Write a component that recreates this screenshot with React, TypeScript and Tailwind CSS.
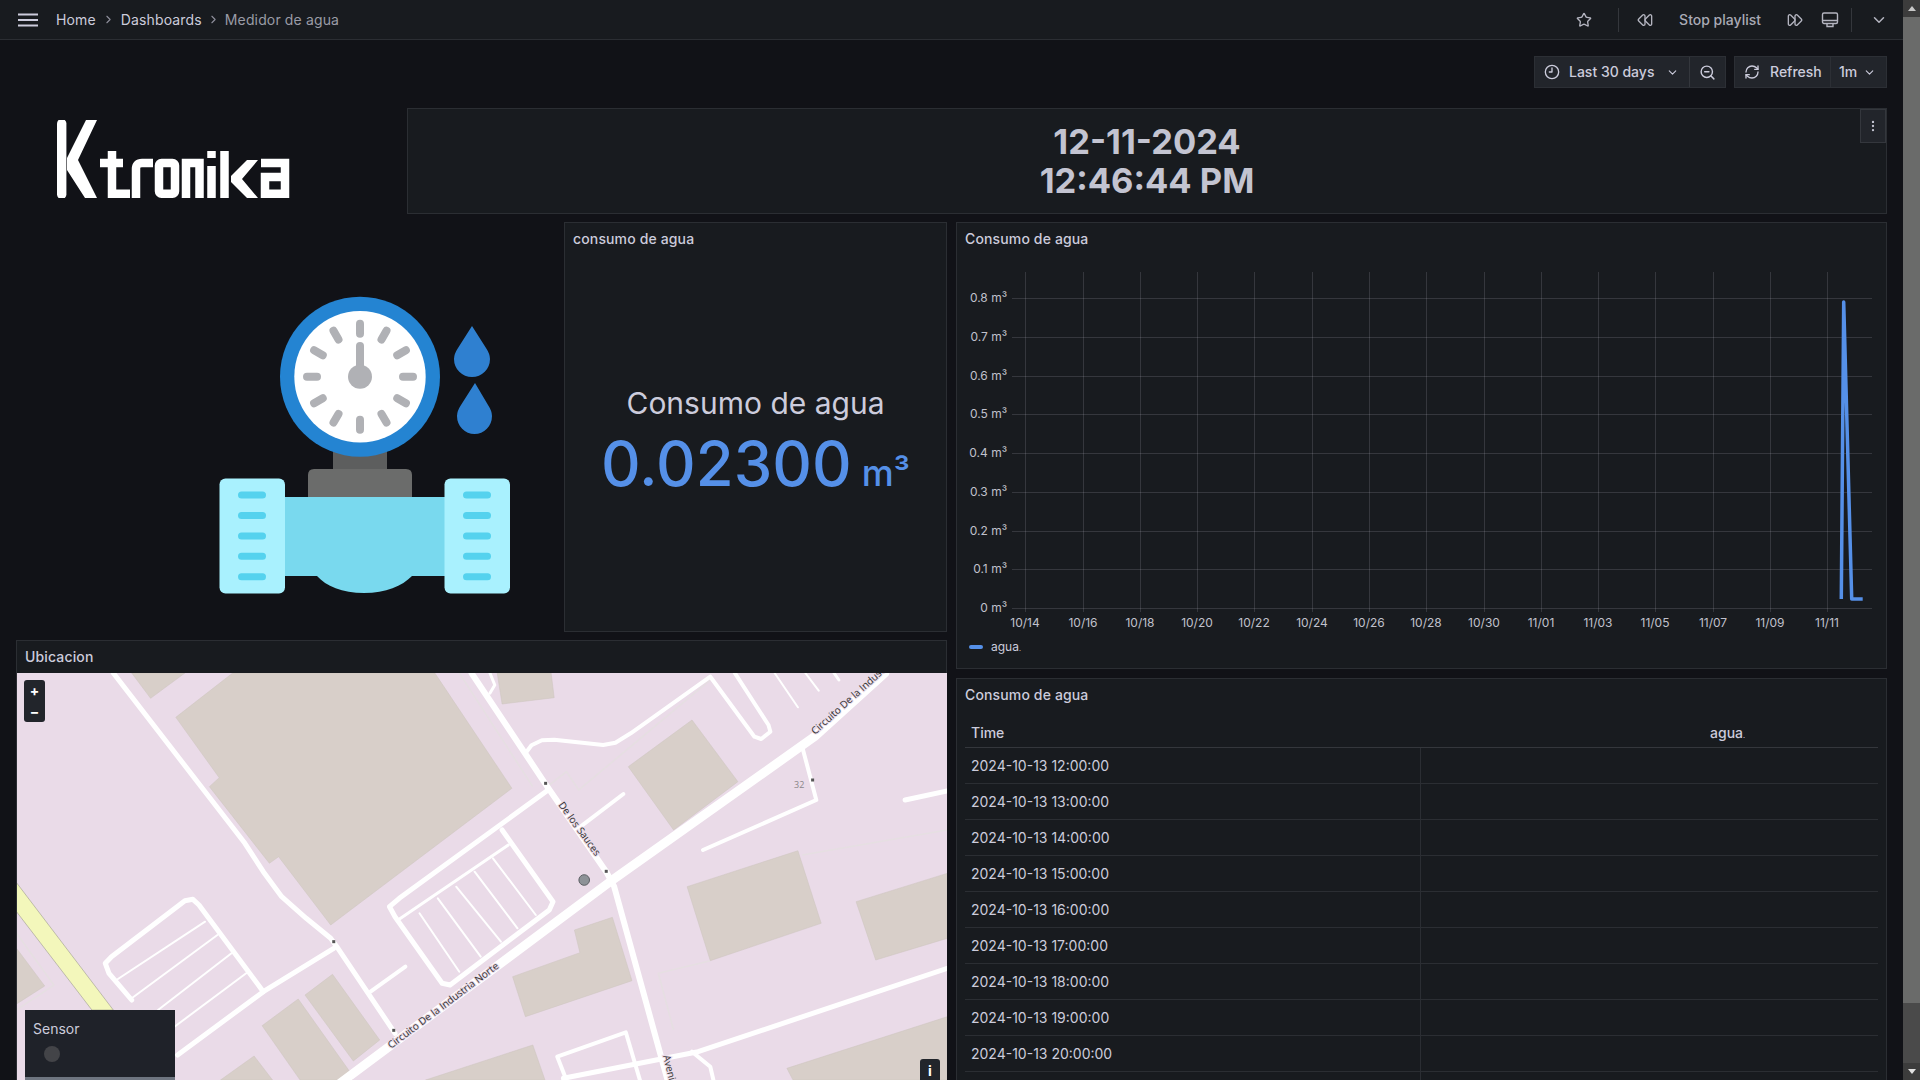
import { ChevronDown, ChevronRight, Clock9, EllipsisVertical, FastForward, RefreshCw, Rewind, Star, ZoomOut } from "lucide-react";

// map drawing was traced off a stretched crop, so convert to panel px here
const at = (x: number, y: number) => `${(x / 1.633 - 17).toFixed(1)},${(y / 3 - 43).toFixed(1)}`;
const line = (pts: number[][]) => pts.map(([x, y]) => at(x, y)).join(" ");

const buildings = [
  [[287, 262], [380, 129], [710, 129], [836, 475], [540, 885], [455, 680], [440, 700], [342, 470], [358, 443]],
  [[215, 129], [302, 129], [246, 205]],
  [[812, 129], [900, 129], [905, 203], [820, 222]],
  [[1130, 270], [1205, 455], [1100, 600], [1026, 410]],
  [[1122, 770], [1303, 662], [1341, 880], [1160, 992]],
  [[1398, 815], [1547, 730], [1547, 925], [1430, 990]],
  [[938, 900], [1000, 862], [1032, 1052], [858, 1160], [837, 1040], [947, 968]],
  [[543, 1033], [620, 1230], [577, 1293], [498, 1095]],
  [[428, 1187], [487, 1107], [570, 1322], [575, 1350], [490, 1350]],
  [[415, 1278], [445, 1350], [360, 1350]],
  [[27, 955], [73, 1068], [27, 1122]],
  [[870, 1245], [890, 1350], [695, 1350]],
  [[1547, 1160], [1547, 1350], [1295, 1350], [1285, 1315]],
];

// [width, points]
const roads: [number, number[][]][] = [
  [5, [[185, 129], [400, 640], [430, 725], [460, 800], [500, 865], [540, 925], [550, 950], [645, 1210]]],
  [9, [[1445, 129], [1330, 320], [1000, 750], [555, 1360]]],
  [6, [[770, 129], [890, 460], [990, 725], [1003, 770], [1090, 1350]]],
  [5, [[895, 480], [652, 805], [636, 830], [645, 860], [722, 1060], [735, 1065], [897, 840], [903, 815], [820, 600]]],
  [3, [[650, 870], [830, 645]]],
  [2, [[685, 850], [750, 1025]]],
  [2, [[715, 805], [785, 980]]],
  [2, [[745, 770], [818, 935]]],
  [2, [[775, 725], [845, 895]]],
  [2, [[805, 685], [875, 855]]],
  [5, [[545, 955], [430, 1085], [290, 1275]]],
  [5, [[215, 1110], [178, 1030], [172, 1000], [182, 980], [302, 812], [315, 808], [325, 825], [430, 1085]]],
  [2, [[190, 1050], [335, 875]]],
  [2, [[215, 1105], [355, 915]]],
  [2, [[258, 1140], [378, 970]]],
  [2, [[285, 1190], [402, 1030]]],
  [4, [[860, 365], [868, 346], [885, 331], [905, 329], [985, 345], [1005, 338], [1030, 310], [1160, 140], [1232, 320], [1243, 327], [1258, 305], [1255, 285], [1200, 129]]],
  [2, [[1265, 129], [1303, 232]]],
  [2, [[1315, 129], [1337, 182]]],
  [3, [[1362, 129], [1370, 150]]],
  [4, [[948, 590], [1018, 492]]],
  [4, [[1310, 350], [1333, 510], [1148, 660]]],
  [5, [[1478, 510], [1547, 483]]],
  [4, [[605, 1085], [662, 1010]]],
  [5, [[1547, 1015], [1140, 1265], [920, 1345]]],
  [4, [[925, 1350], [910, 1280], [1022, 1207], [1045, 1350]]],
  [4, [[1130, 1265], [1160, 1310], [1165, 1350]]],
  [3, [[800, 190], [808, 165], [800, 129]]],
];

const faintLines = [
  [[750, 129], [870, 470]],
  [[1160, 150], [945, 480], [925, 425], [890, 475]],
  [[1310, 675], [1547, 600]],
  [[1100, 1200], [1075, 1030], [1160, 992]],
  [[27, 910], [88, 1065], [27, 1140]],
];

const gates = [[891, 460], [545, 935], [990, 724], [1327, 450], [643, 1201]];

const xTicks: [number, string][] = [
  [1025.5, "10/14"], [1083.5, "10/16"], [1140.5, "10/18"], [1197.5, "10/20"], [1254.5, "10/22"],
  [1312.5, "10/24"], [1369.5, "10/26"], [1426.5, "10/28"], [1484.5, "10/30"], [1541.5, "11/01"],
  [1598.5, "11/03"], [1655.5, "11/05"], [1713.5, "11/07"], [1770.5, "11/09"], [1827.5, "11/11"],
];

const yTicks: [number, string][] = [
  [298.5, "0.8 m³"], [337.5, "0.7 m³"], [376.5, "0.6 m³"], [414.5, "0.5 m³"], [453.5, "0.4 m³"],
  [492.5, "0.3 m³"], [531.5, "0.2 m³"], [569.5, "0.1 m³"], [608.5, "0 m³"],
];

const rows = ["12", "13", "14", "15", "16", "17", "18", "19", "20", "21"];

function Logo() {
  return (
    <svg width="234" height="78" viewBox="0 0 234 78" fill="none" stroke="#fff" strokeWidth="8.500">
      <path d="M4.700 3.500V74.500" strokeWidth="9.400" strokeLinecap="round" />
      <path d="M29 0H40L21 40L40 78H28L10 50V38Z" fill="#fff" stroke="none" />
      <path d="M43 43H66M55 31V73.700H73" />
      <path d="M79 78V49Q79 43 85 43H96" />
      <rect x="102" y="43" width="16" height="30.700" rx="2.500" />
      <path d="M129 78V43H142.500V78" />
      <path d="M154.500 46V78M154.500 31V38" />
      <path d="M167.500 31V78" />
      <path d="M190 40H201L185 59L201 78H190L174 62V56Z" fill="#fff" stroke="none" />
      <path d="M204 43H228V73.700H208V57H228" />
    </svg>
  );
}

function WaterMeter() {
  const ticks = Array.from({ length: 12 }, (_, i) => (i * Math.PI) / 6);
  return (
    <svg width="370" height="350" viewBox="0 0 370 350">
      <rect x="153" y="178" width="54" height="24" fill="#5d5e5e" />
      <path d="M128 226V204Q128 198 134 198H226Q232 198 232 204V226Z" fill="#6b6c6b" />
      <circle cx="180" cy="105.700" r="80" fill="#2484d2" />
      <circle cx="180" cy="105.700" r="65.700" fill="#fff" />
      {ticks.map((a, i) => (
        <line
          key={i}
          x1={180 + Math.sin(a) * 43}
          y1={105.7 - Math.cos(a) * 43}
          x2={180 + Math.sin(a) * 53}
          y2={105.7 - Math.cos(a) * 53}
          stroke="#b0b1b5"
          strokeWidth="8"
          strokeLinecap="round"
        />
      ))}
      <line x1="180" y1="75" x2="180" y2="105" stroke="#b0b1b5" strokeWidth="8" strokeLinecap="round" />
      <circle cx="180" cy="105.700" r="12" fill="#b0b1b5" />
      <path d="M292 55L306 77Q310 83 310 88A18 18 0 0 1 274 88Q274 83 278 77Z" fill="#2f80d0" />
      <path d="M295 112L308 134Q312 140 312 145A17.500 18 0 0 1 277 145Q277 140 281 134Z" fill="#2f80d0" />
      <rect x="100" y="226" width="170" height="79" fill="#79d9ee" />
      <path d="M137 305H232C222 315 206 322 184 322C162 322 146 315 137 305Z" fill="#79d9ee" />
      <rect x="39.500" y="207.500" width="65.500" height="115" rx="6" fill="#a9f1fe" />
      <rect x="264.500" y="207.500" width="65.500" height="115" rx="6" fill="#a9f1fe" />
      {[224, 244.6, 265, 285.300, 305.700].map((y) => (
        <g key={y} fill="#55d2ee">
          <rect x="58" y={y - 3.5} width="28" height="7" rx="3.500" />
          <rect x="283" y={y - 3.5} width="28" height="7" rx="3.500" />
        </g>
      ))}
    </svg>
  );
}

function WaterChart() {
  return (
    <svg width="929" height="379" viewBox="957 256 929 379" className="block">
      {xTicks.map(([x]) => (
        <line key={x} x1={x} x2={x} y1="272" y2="612" stroke="#ccccdc" strokeOpacity="0.16" />
      ))}
      {yTicks.map(([y]) => (
        <line key={y} x1="1012" x2="1872" y1={y} y2={y} stroke="#ccccdc" strokeOpacity="0.16" />
      ))}
      <g fill="#c0c1cc" fontSize="12">
        {yTicks.map(([y, label]) => (
          <text key={label} x="1007" y={y + 3} textAnchor="end">
            {label}
          </text>
        ))}
        {xTicks.map(([x, label]) => (
          <text key={label} x={x - 0.5} y="627" textAnchor="middle">
            {label}
          </text>
        ))}
      </g>
      <polyline
        points="1841.300,599 1843.700,302 1851.700,599 1862.700,599"
        fill="none"
        stroke="#5590e8"
        strokeWidth="3.500"
        strokeLinejoin="round"
      />
    </svg>
  );
}

function WaterMap() {
  return (
    <svg width="930" height="407" viewBox="0 0 930 407" className="block bg-[#eadbe8]">
      {faintLines.map((pts, i) => (
        <polyline key={i} points={line(pts)} fill="none" stroke="#e6dfe2" strokeWidth="1.500" />
      ))}
      {buildings.map((pts, i) => (
        <polygon key={i} points={line(pts)} fill="#d8cfc9" stroke="#cdc4bf" strokeWidth="0.500" />
      ))}
      <polygon points={line([[27, 758], [185, 1140], [150, 1140], [27, 845]])} fill="#f3f7bb" stroke="#8d8d80" strokeWidth="0.500" />
      {roads.map(([w, pts], i) => (
        <polyline key={i} points={line(pts)} fill="none" stroke="#fff" strokeWidth={w} strokeLinejoin="round" strokeLinecap="round" />
      ))}
      {gates.map(([x, y]) => (
        <rect key={x} x={x / 1.633 - 18.5} y={y / 3 - 44.5} width="3" height="3" fill="#555" />
      ))}
      <circle cx={954 / 1.633 - 17} cy={750 / 3 - 43} r="5.300" fill="#8d9297" stroke="#5d6064" />
      <g fill="#333" fontSize="10" stroke="#eadbe8" strokeWidth="2" paintOrder="stroke" fontFamily="'Open Sans', sans-serif">
        <text transform="translate(541,132) rotate(54)">De los Sauces</text>
        <text transform="translate(374,376) rotate(-37)">Circuito De la Industria Norte</text>
        <text transform="translate(798,62) rotate(-42)">Circuito De la Industria</text>
        <text transform="translate(646,383) rotate(76)">Avenida</text>
        <text x="777" y="115" fontSize="9" fill="#8b8689" stroke="none">32</text>
      </g>
    </svg>
  );
}

export default function App() {
  return (
    <div className="flex h-screen w-screen overflow-hidden bg-[#111217] text-[#ccccdc] [font-family:Inter,sans-serif]">
      <div className="flex min-w-0 flex-1 flex-col">
        {/* Top bar */}
        <header className="flex h-10 shrink-0 items-center border-b border-[#2b2e33] bg-[#181b1f] pr-[15px] text-sm">
          <svg width="20" height="14" viewBox="0 0 20 14" className="ml-[18px]" stroke="#ccccdc" strokeWidth="2">
            <path d="M0 1.500H20M0 7H20M0 12.500H20" />
          </svg>
          <div className="ml-[18px] flex items-center tracking-[0.01em]">
            <span>Home</span>
            <ChevronRight size={13} className="mx-[6px] text-[#8e8f9b]" />
            <span>Dashboards</span>
            <ChevronRight size={13} className="mx-[5px] text-[#8e8f9b]" />
            <span className="text-[#9a9ba6]">Medidor de agua</span>
          </div>
          <div className="ml-auto flex items-center text-[#b4b5c0]">
            <Star size={16} className="mx-[2px]" />
            <div className="mr-[16px] ml-[24px] h-6 w-px bg-[#34373c]" />
            <Rewind size={16} className="mx-[2px]" />
            <span className="mx-[24px] font-medium text-[#a9aab5]">Stop playlist</span>
            <FastForward size={16} className="mx-[2px]" />
            <svg width="18" height="18" viewBox="0 0 18 18" fill="none" stroke="currentColor" strokeWidth="1.400" className="ml-[16px]">
              <rect x="1.500" y="2" width="15" height="10.500" rx="1.500" />
              <path d="M1.500 9.500H16.500M6 12.500V15.500H12V12.500" />
            </svg>
            <div className="mx-[12px] h-6 w-px bg-[#34373c]" />
            <ChevronDown size={18} className="ml-[6px]" />
          </div>
        </header>

        {/* Time range controls */}
        <div className="flex h-[68px] shrink-0 items-start justify-end gap-2 pt-4 pr-4 text-sm font-medium">
          <div className="flex h-8 items-center border border-[#2c2f35] bg-[#22252b]">
            <div className="flex h-full w-[155px] items-center border-r border-[#34373d] pl-[9px]">
              <Clock9 size={16} />
              <span className="ml-[9px]">Last 30 days</span>
              <ChevronDown size={13} className="ml-[12px]" />
            </div>
            <div className="flex w-[35px] justify-center">
              <ZoomOut size={17} />
            </div>
          </div>
          <div className="flex h-8 items-center border border-[#2c2f35] bg-[#22252b]">
            <div className="flex h-full w-[96px] items-center border-r border-[#2c2f35] pl-[9px]">
              <RefreshCw size={16} />
              <span className="ml-[10px]">Refresh</span>
            </div>
            <div className="flex w-[55px] items-center pl-[8px]">
              <span>1m</span>
              <ChevronDown size={13} className="ml-[6px]" />
            </div>
          </div>
        </div>

        {/* Dashboard */}
        <div className="px-4">
          <div className="flex h-[106px] items-start">
            <div className="w-[391px] pt-3 pl-[41px]">
              <Logo />
            </div>
            <section className="relative flex h-full flex-1 flex-col items-center justify-center border border-[#2b2e33] bg-[#181b1f] text-center text-[34.500px] leading-[39px] font-bold text-[#c3c4d1]">
              <div>12-11-2024</div>
              <div>12:46:44 PM</div>
              <div className="absolute top-0 right-0 flex h-[34px] w-[26px] items-center justify-center border border-[#34373d] bg-[#22252b]">
                <EllipsisVertical size={14} />
              </div>
            </section>
          </div>

          <div className="mt-2 flex gap-[9px]">
            <div className="w-[931px] shrink-0">
              <div className="flex h-[410px] gap-2">
                <div className="w-[540px] shrink-0 pt-[49px] pl-[164px]">
                  <WaterMeter />
                </div>
                <section className="flex w-[383px] flex-col border border-[#2b2e33] bg-[#181b1f]">
                  <h2 className="px-2 pt-[6px] text-sm font-medium tracking-[0.01em]">consumo de agua</h2>
                  <div className="flex flex-1 flex-col items-center pt-[136px]">
                    <div className="text-[30px] leading-[36px]">Consumo de agua</div>
                    <div className="mt-[8px] flex items-baseline leading-[70px] font-medium text-[#5590e8]">
                      <span className="text-[61.500px]">0.02300</span>
                      <span className="ml-[10px] text-[36px]">m³</span>
                    </div>
                  </div>
                </section>
              </div>
              <section className="mt-2 h-[450px] border border-[#2b2e33] bg-[#181b1f]">
                <h2 className="flex h-[32px] items-center px-2 text-sm font-medium tracking-[0.01em]">Ubicacion</h2>
                <div className="relative">
                  <WaterMap />
                  <div className="absolute top-[7px] left-[7px] flex h-[42px] w-[21px] flex-col items-center rounded-[3px] bg-[#22252b] text-sm leading-[21px] font-bold text-white">
                    <span>+</span>
                    <span>−</span>
                  </div>
                  <div className="absolute top-[337px] left-2 h-[67px] w-[150px] bg-[#1f2229] pt-[9px] pl-2 text-sm">
                    <div>Sensor</div>
                    <div className="mt-[7px] ml-[11px] h-4 w-4 rounded-full bg-[#434448]" />
                  </div>
                  <div className="absolute top-[404px] left-2 h-[3px] w-[150px] bg-[#6e7580]" />
                  <div className="absolute top-[386px] left-[903px] flex h-6 w-5 justify-center rounded-[3px] bg-[#22252b] pt-[2px] text-sm font-bold text-white">
                    i
                  </div>
                </div>
              </section>
            </div>

            <div className="min-w-0 flex-1">
              <section className="h-[447px] border border-[#2b2e33] bg-[#181b1f]">
                <h2 className="flex h-[33px] items-center px-2 pb-[2px] text-sm font-medium tracking-[0.01em]">Consumo de agua</h2>
                <WaterChart />
                <div className="flex items-center pt-[4px] pl-3 text-xs">
                  <div className="h-1 w-[14px] rounded-sm bg-[#5590e8]" />
                  <span className="ml-2">
                    agua<span className="text-[7px]">.</span>
                  </span>
                </div>
              </section>
              <section className="mt-[9px] h-[420px] overflow-hidden border border-[#2b2e33] bg-[#181b1f]">
                <h2 className="flex h-[33px] items-center px-2 pb-[2px] text-sm font-medium tracking-[0.01em]">Consumo de agua</h2>
                <div className="mx-2 text-sm">
                  <div className="flex h-9 items-center border-b border-[#34373c] pt-[7px] font-medium">
                    <div className="w-[456px] pl-[6px]">Time</div>
                    <div className="pl-[289px]">
                      agua<span className="text-[7px]">.</span>
                    </div>
                  </div>
                  {rows.map((h) => (
                    <div key={h} className="flex h-9 items-stretch border-b border-[#2b2e33]">
                      <div className="flex w-[456px] items-center border-r border-[#2b2e33] pl-[6px]">2024-10-13 {h}:00:00</div>
                    </div>
                  ))}
                </div>
              </section>
            </div>
          </div>
        </div>
      </div>

      {/* Browser scrollbar */}
      <div className="flex h-full w-[17px] shrink-0 flex-col bg-[#4a4a4a]">
        <div className="flex h-[17px] items-center justify-center bg-[#3c3c3c]">
          <div className="h-0 w-0 border-x-[4px] border-b-[5px] border-x-transparent border-b-[#c8c8c8]" />
        </div>
        <div className="h-[986px] bg-[#6a6b6a]" />
        <div className="flex-1" />
        <div className="flex h-[17px] items-center justify-center bg-[#3c3c3c]">
          <div className="h-0 w-0 border-x-[4px] border-t-[5px] border-x-transparent border-t-[#e0e0e0]" />
        </div>
      </div>
    </div>
  );
}
